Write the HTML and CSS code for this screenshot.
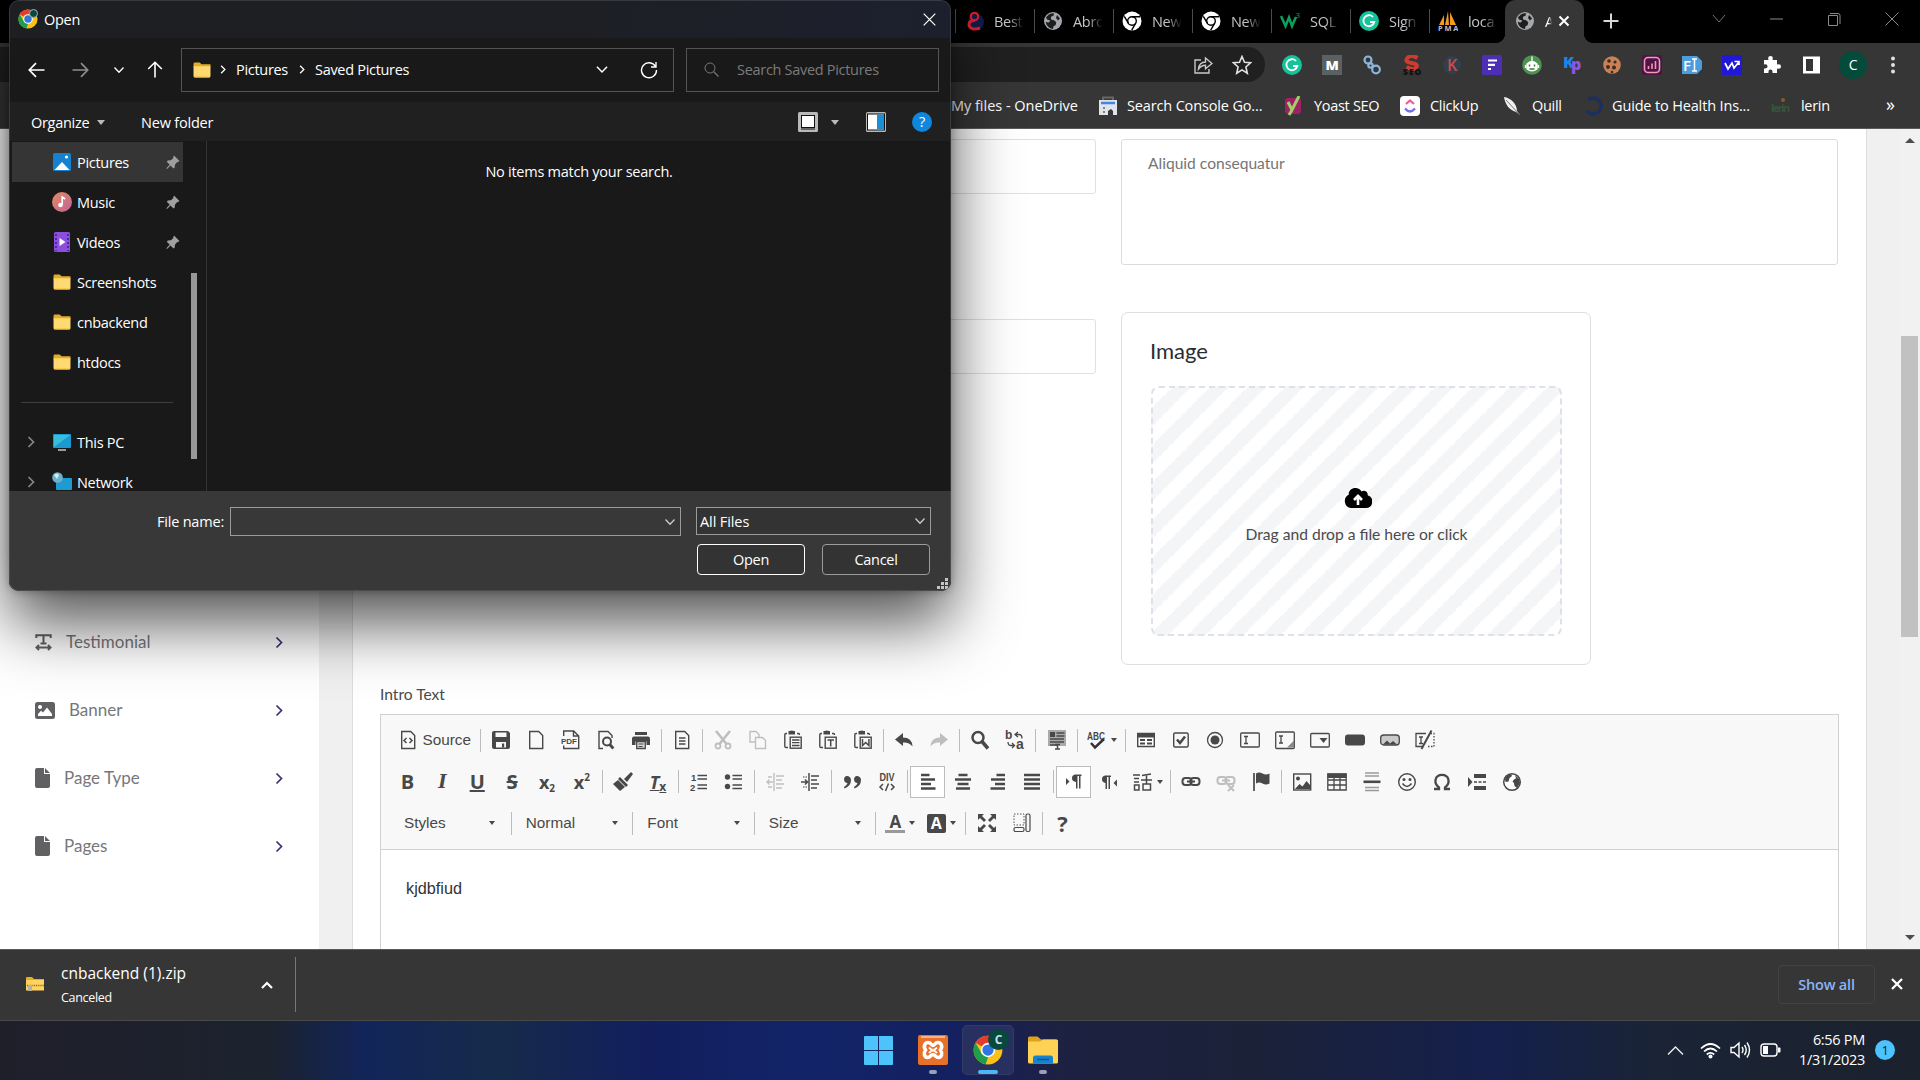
FILE: index.html
```html
<!DOCTYPE html>
<html lang="en">
<head>
<meta charset="utf-8">
<title>Admin - Pages</title>
<link rel="stylesheet" href="styles.css">
</head>
<body>
<svg class="defs" width="0" height="0" aria-hidden="true">
  <symbol id="chrome" viewBox="0 0 48 48"><circle cx="24" cy="24" r="23" fill="#fbc116"/><path d="M24 24 4.100 12.500A23 23 0 0 1 43.900 12.500H24Z" fill="#e33b2e"/><path d="M4.100 12.500 14 30l10 5-9 10.200A23 23 0 0 1 4.100 12.500Z" fill="#1f9d4d"/><path d="m14.500 30 9.500 6-4 11A23 23 0 0 1 8 40Z" fill="#1f9d4d"/><circle cx="24" cy="24" r="11.500" fill="#fff"/><circle cx="24" cy="24" r="9" fill="#2f76e0"/></symbol>
  <symbol id="chrome-w" viewBox="0 0 20 20"><circle cx="10" cy="10" r="9.500" fill="#fff"/><circle cx="10" cy="10" r="4.300" fill="none" stroke="#000" stroke-width="1.400"/><path d="M10 5.700h8M6.300 12.200 2.300 5.300M13.700 12.200l-4 7" stroke="#000" stroke-width="1.400"/></symbol>
  <symbol id="globe" viewBox="0 0 20 20"><circle cx="10" cy="10" r="9" fill="#a5a7aa"/><path d="M3 6.500c2-3 5-4.500 8-4.200l-.5 2.500-2.500 1v2.700l3 .8 2.300 2-.8 3-2 1-.5 2.700C6 17.500 3.500 15 2.700 11l3.300.5 1.200-2L4 8.500ZM14 4l3 3.500-2 2-2-2.500Z" fill="#1d1e20"/></symbol>
  <symbol id="folder" viewBox="0 0 18 17"><path d="M0 2q0-1.500 1.500-1.500h5l2 2H18v3H0Z" fill="#e6ac25"/><path d="M0 4.500h18V15q0 1.500-1.500 1.500h-15Q0 16.500 0 15Z" fill="#ffd971"/><path d="M0 15.500h18q-.3 1-1.500 1h-15Q.3 16.500 0 15.500Z" fill="#f0b92f"/></symbol>
  <symbol id="pin" viewBox="0 0 14 14"><path d="m8 .5 5.500 5.500-1.500 1-1 .2-2 2.300-.3 3-1.200 1-3-3L1 14 .3 13.300 3.700 9.800.8 6.800l1-1.200 3-.3 2.400-2L7.300 2Z" fill="#9d9fa1"/></symbol>
  <symbol id="chev" viewBox="0 0 8 12"><path d="m1.500 1 5 5-5 5" fill="none" stroke="currentColor" stroke-width="1.700"/></symbol>
  <symbol id="down" viewBox="0 0 12 8"><path d="m1.500 1.500 4.500 4.700 4.500-4.700" fill="none" stroke="currentColor" stroke-width="1.300"/></symbol>
  <symbol id="file" viewBox="0 0 15 20"><path d="M2 0h7v6h6v12q0 2-2 2H2q-2 0-2-2V2q0-2 2-2ZM10 0l5 5h-5Z" fill="#616163"/></symbol>
  <symbol id="paste" viewBox="0 0 20 20"><path d="M4 3.500H3q-1.200 0-1.200 1.200v11.600q0 1.200 1.200 1.200h2M14 3.500h1.500q1 0 1 1.500" fill="none" stroke="#484848" stroke-width="1.400"/><path d="M5.500 1h1.500q1-1.200 4 0H12v3.500H5.500Z"/><rect x="7.200" y="7.200" width="11" height="11" fill="none" stroke="#484848" stroke-width="1.400"/></symbol>
  <symbol id="page" viewBox="0 0 20 20"><path d="M3.700 1.500h9l4 4v13h-13Z" fill="none" stroke="currentColor" stroke-width="1.400"/></symbol>
</svg>

<div class="screen">
  <header class="tabs">
    <div class="tab"><svg class="fav" viewBox="0 0 20 20"><circle cx="12" cy="11" r="8" fill="#111b4c"/><path d="M16 17c-5 2-11 1-11-3.500C5 11 7 9.500 11 9.500" fill="none" stroke="#d3202b" stroke-width="3"/><circle cx="10.500" cy="5.500" r="3.700" fill="none" stroke="#d3202b" stroke-width="2.200"/></svg><span>Best</span></div>
    <div class="tab"><svg class="fav"><use href="#globe"/></svg><span>Abro</span></div>
    <div class="tab"><svg class="fav"><use href="#chrome-w"/></svg><span>New</span></div>
    <div class="tab"><svg class="fav"><use href="#chrome-w"/></svg><span>New</span></div>
    <div class="tab"><svg class="fav" viewBox="0 0 20 20"><path d="m1 5 4.500 10L9 6.500 12 15l4-9" fill="none" stroke="#0aa05c" stroke-width="2.500"/><text x="15.500" y="7" font-size="8" fill="#0aa05c">3</text></svg><span>SQL</span></div>
    <div class="tab"><svg class="fav" viewBox="0 0 20 20"><circle cx="10" cy="10" r="10" fill="#15c39a"/><path d="M14 6A5.500 5.500 0 1 0 15.300 11H11" fill="none" stroke="#fff" stroke-width="1.800"/></svg><span>Sign</span></div>
    <div class="tab"><svg class="fav" viewBox="0 0 20 20"><path d="M1 14 6 4v10ZM7 14 10 0l1 14ZM12 14V1l6 13Z" fill="#f39a1f"/><text x="0" y="20" font-size="7.500" font-weight="700" fill="#b9bcd6" textLength="20">PMA</text></svg><span>loca</span></div>
    <div class="tab active"><svg class="fav"><use href="#globe"/></svg><span class="short">A</span><svg class="tx" viewBox="0 0 12 12"><path d="m1.500 1.500 9 9m0-9-9 9" stroke="#fff" stroke-width="2"/></svg></div>
    <svg class="plus" viewBox="0 0 16 16"><path d="M8 .5v15M.5 8h15" stroke="#d8d8d8" stroke-width="2"/></svg>
    <div class="wincontrols">
      <svg width="14" height="20" viewBox="0 0 14 20"><path d="m1 6 6 7 6-7" fill="none" stroke="#727272"/></svg>
      <svg width="14" height="20" viewBox="0 0 14 20"><path d="M0 10h13" stroke="#8a8a8a"/></svg>
      <svg width="14" height="20" viewBox="0 0 14 20"><path d="M3 4.500h8q2 0 2 2V15M1.500 6.500h9v10h-9z" fill="none" stroke="#8a8a8a"/></svg>
      <svg width="14" height="20" viewBox="0 0 14 20"><path d="m.5 3.500 13 13m0-13-13 13" stroke="#8a8a8a"/></svg>
    </div>
  </header>

  <div class="toolbar">
    <div class="omnibox">
      <svg viewBox="0 0 20 20"><path d="M8 5H2v13h14v-4M5.500 14c.5-4.500 3-7 7-7V3l6.500 5.500-6.500 5.300v-3.600c-3 0-5 1-7 3.800Z" fill="none" stroke="#c8c8c8" stroke-width="1.400"/></svg>
      <svg viewBox="0 0 20 20"><path d="m10 1.500 2.500 5.800 6 .5-4.600 4.200 1.400 6.200-5.300-3.300-5.300 3.300L6.100 12 1.500 7.800l6-.5Z" fill="none" stroke="#e2e2e2" stroke-width="1.600"/></svg>
    </div>
    <div class="exts">
      <svg viewBox="0 0 20 20"><circle cx="10" cy="10" r="10" fill="#15c39a"/><path d="M14 6A5.500 5.500 0 1 0 15.300 11H11" fill="none" stroke="#fff" stroke-width="1.800"/></svg>
      <svg viewBox="0 0 20 20"><rect width="20" height="20" fill="#5b6060"/><text x="3.500" y="14.500" font-size="13" font-weight="800" fill="#fff" textLength="13" lengthAdjust="spacingAndGlyphs">M</text></svg>
      <svg viewBox="0 0 20 20"><g fill="none" stroke="#8db4dc" stroke-width="2.200"><circle cx="6" cy="5" r="3.500"/><circle cx="14" cy="14.500" r="3.800"/><circle cx="8.500" cy="10.500" r="2.200"/></g></svg>
      <svg viewBox="0 0 20 20"><path d="M15.500 3Q9-1 5.500 3t4 5 4.500 4.500-9.500-.5" fill="none" stroke="#cf3a31" stroke-width="4"/><text x="1" y="20" font-size="8.500" font-weight="800" fill="#101010" textLength="18">SEO</text></svg>
      <svg viewBox="0 0 20 20"><circle cx="10" cy="10" r="9" fill="#31404e"/><text x="5" y="16" font-size="16" font-weight="600" fill="#d04a4a">K</text></svg>
      <svg viewBox="0 0 20 20"><rect width="20" height="20" rx="1.500" fill="#4d2fb5"/><path d="M6 5.500h9M6 9.800h7M6 14h3" stroke="#fff" stroke-width="2.200"/></svg>
      <svg viewBox="0 0 20 20"><circle cx="10" cy="10" r="9.800" fill="#4d9350"/><path d="M5 9q5-5 10 0v5q-5 3.500-10 0ZM10 7V1.500M3.500 10v3M16.500 10v3" fill="#fff" stroke="#fff" stroke-width="1.300"/><path d="M7.500 9.500v2M12.500 9.500v2M7.500 14h5" stroke="#3b7b40" stroke-width="1.500"/></svg>
      <svg viewBox="0 0 20 20"><text x="1" y="13" font-size="16" font-weight="800" fill="#1687e8">K</text><text x="9" y="15" font-size="16" font-weight="800" fill="#8c55e8">p</text></svg>
      <svg viewBox="0 0 20 20"><circle cx="10" cy="10" r="8.800" fill="#c98155"/><g fill="#3c2b23"><circle cx="7" cy="6" r="1.800"/><circle cx="13" cy="7" r="1.600"/><circle cx="6" cy="12" r="1.900"/><circle cx="12" cy="12.500" r="2"/><circle cx="10" cy="17" r="1.300"/></g></svg>
      <svg viewBox="0 0 20 20"><rect width="20" height="20" rx="2" fill="#4f1347"/><rect x="2.500" y="2.500" width="15" height="15" rx="3.500" fill="none" stroke="#f09ab4" stroke-width="1.600"/><path d="M6.500 14v-3M10 14V8.500M13.500 14V6" stroke="#f09ab4" stroke-width="1.600"/></svg>
      <svg viewBox="0 0 20 20"><path d="M0 1h15l5 5v8l-5 5H0Z" fill="#4d9cdb"/><text x="1" y="15.500" font-size="15" font-weight="600" fill="#fff">F</text><path d="M10 4h5m-2.500 0v12M10 16h5" stroke="#fff" stroke-width="1.500"/></svg>
      <svg viewBox="0 0 20 20"><rect width="20" height="20" fill="#2117d6"/><path d="m3 8 3 6 4-6 2 5 4.500-5.500M12.500 6.500h4.500V10" fill="none" stroke="#fff" stroke-width="1.700"/></svg>
      <svg viewBox="0 0 20 20"><path d="M2 5h4.500q-1.200-4 2-4t2 4H15v4.500q4-1.200 4 2t-4 2V18h-4.500q.5-3.500-2-3.500t-2 3.500H2v-4.500q3.500.3 3.500-2.200T2 9.500Z" fill="#fff"/></svg>
      <svg viewBox="0 0 20 20"><path d="M1 1.500h17v17H1ZM4 4v12h7V4Z" fill="#fff" fill-rule="evenodd"/></svg>
      <svg class="avatar" viewBox="0 0 28 28"><circle cx="14" cy="14" r="14" fill="#044b3c"/><text x="14" y="19" font-size="14" text-anchor="middle" fill="#fff">C</text></svg>
      <svg viewBox="0 0 20 20"><g fill="#e0e0e0"><circle cx="10" cy="3.500" r="2"/><circle cx="10" cy="10" r="2"/><circle cx="10" cy="16.500" r="2"/></g></svg>
    </div>
  </div>

  <nav class="bookmarks">
    <span class="bm b1">My files - OneDrive</span>
    <span class="bm b2"><svg viewBox="0 0 20 20"><path d="M5 4V1.500h10V4" fill="none" stroke="#666" stroke-width="2"/><path d="M1 4h18v15h-4v-4l-2-2-3 2v4H1Z" fill="#dfe3ea"/><path d="M3 7h14" stroke="#4b82e8" stroke-width="2.500"/><path d="M5 12h2M5 16h2" stroke="#7c8591" stroke-width="2"/></svg>Search Console Go...</span>
    <span class="bm b3"><svg viewBox="0 0 20 20"><rect x="1" y="2" width="16" height="16" rx="3" fill="#a02066"/><path d="m4 6 4 8L15 0M8 14l-3 5" fill="none" stroke="#9fcf66" stroke-width="3"/></svg>Yoast SEO</span>
    <span class="bm b4"><svg viewBox="0 0 20 20"><rect width="20" height="20" rx="4" fill="#fff"/><path d="m6 8 4-3.500L14 8" fill="none" stroke="#f45b92" stroke-width="2.300"/><path d="M5 12.500q5 6 10 0" fill="none" stroke="#716cf2" stroke-width="2.300"/></svg>ClickUp</span>
    <span class="bm b5"><svg viewBox="0 0 20 20"><path d="M2 1c7 1 13 7 13 14l3 4-4-3C7 14 3 8 2 1Z" fill="#efefef"/><path d="m4 4 13 14" stroke="#777"/></svg>Quill</span>
    <span class="bm b6"><svg viewBox="0 0 20 20"><path d="M5 4a8 8 0 1 1-1 11" fill="none" stroke="#1d305d" stroke-width="3.500"/></svg>Guide to Health Ins...</span>
    <span class="bm b7"><svg viewBox="0 0 20 20"><text x="0" y="16" font-size="11" font-weight="700" fill="#37543c" textLength="19">lerin</text><circle cx="12" cy="4" r="2" fill="#8a5a26"/></svg>lerin</span>
    <span class="bm more">»</span>
  </nav>

  <div class="page">
    <aside class="sidebar">
      <a class="nav"><svg width="17" height="17" viewBox="0 0 17 17"><path d="M1.300 4V1.300h14.400V4M8.500 1.300V9.500M5.500 9.500h6M2 13.500h13M4 11l-2.500 2.500L4 16M13 11l2.500 2.500L13 16" fill="none" stroke="#616163" stroke-width="2"/></svg><span>Testimonial</span><svg class="go"><use href="#chev"/></svg></a>
      <a class="nav"><svg width="20" height="17" viewBox="0 0 20 17"><path d="M2.500 0h15Q20 0 20 2.500v12q0 2.500-2.500 2.500h-15Q0 17 0 14.500v-12Q0 0 2.500 0ZM5 3a2 2 0 1 0 .1 0ZM3 14h14v-2l-5-6.500-4 5-2-1.700L3 12Z" fill="#616163" fill-rule="evenodd"/></svg><span>Banner</span><svg class="go"><use href="#chev"/></svg></a>
      <a class="nav"><svg width="15" height="20"><use href="#file"/></svg><span>Page Type</span><svg class="go"><use href="#chev"/></svg></a>
      <a class="nav"><svg width="15" height="20"><use href="#file"/></svg><span>Pages</span><svg class="go"><use href="#chev"/></svg></a>
    </aside>
    <main class="content">
      <section class="card">
        <div class="cols">
          <div class="col left"><div class="field"></div><div class="field"></div></div>
          <div class="col">
            <div class="textarea"><span>Aliquid consequatur</span></div>
            <div class="imgcard">
              <h4>Image</h4>
              <div class="drop">
                <svg width="28" height="20" viewBox="0 0 28 20"><path d="M7 20a7 7 0 0 1-2.300-13.200C4.500 2.800 7.500 0 11.500 0c2.700 0 5 1.400 6 3.500 2.800-1.800 6.700.2 6.200 3.800A6.500 6.500 0 0 1 22 20Z"/><path d="M14 17V8m-4 4 4-4.200 4 4.200" fill="none" stroke="#fff" stroke-width="2.600"/></svg>
                <p>Drag and drop a file here or click</p>
              </div>
            </div>
          </div>
        </div>
        <label class="lbl">Intro Text</label>
        <div class="editor">
          <div class="cktop">
            <div class="row">
              <span class="b source"><svg class="i" color="#484848"><use href="#page"/></svg><svg class="i over" viewBox="0 0 20 20"><path d="m8.500 8-2.500 2.500L8.500 13m3-5 2.500 2.500-2.500 2.500" fill="none" stroke="#484848" stroke-width="1.500"/></svg>Source</span>
              <i class="sep"></i>
              <span class="b"><svg class="i" viewBox="0 0 20 20"><path d="M3 1h14l2 2v14q0 2-2 2H3q-2 0-2-2V3q0-2 2-2Zm1.500 1.500V7h11V2.500ZM5 12v5.500h10V12Z" fill-rule="evenodd"/><path d="M11 13.500h2.200v4H11Z"/></svg></span>
              <span class="b"><svg class="i" color="#484848"><use href="#page"/></svg></span>
              <span class="b"><svg class="i" viewBox="0 0 20 20"><path d="M2.700 6V1h10l5 5v12.500h-15v-3M12.500 1v5h5" fill="none" stroke="#484848" stroke-width="1.400"/><rect x="0" y="7.500" width="16" height="7" fill="#f8f8f8"/><text x="0" y="14" font-size="8" font-weight="800" textLength="16" lengthAdjust="spacingAndGlyphs">PDF</text></svg></span>
              <span class="b"><svg class="i" viewBox="0 0 20 20"><path d="M7 18.500H3v-17h9l4 4V8" fill="none" stroke="#484848" stroke-width="1.400"/><circle cx="11" cy="11.500" r="4" fill="none" stroke="#484848" stroke-width="2"/><path d="m13.800 14.500 3.500 4" stroke="#484848" stroke-width="2.800"/></svg></span>
              <span class="b"><svg class="i" viewBox="0 0 20 20"><path d="M4 2h12v3H4ZM3 6.500h14q2 0 2 2V15h-3.500v-3.500h-11V15H1V8.500q0-2 2-2Z"/><path d="M5.700 11.500h8.600v7H5.700Z" fill="#d9d9d9" stroke="#484848" stroke-width="1.300"/><path d="M7.500 14h5M7.500 16.500h4" stroke="#484848" stroke-width="1.200"/></svg></span>
              <i class="sep"></i>
              <span class="b"><svg class="i" color="#484848" viewBox="0 0 20 20"><path d="M3.700 1.500h9l4 4v13h-13ZM7 8h6.500M7 11h6.500M7 14h6.500" fill="none" stroke="#484848" stroke-width="1.400"/></svg></span>
              <i class="sep"></i>
              <span class="b dis"><svg class="i" viewBox="0 0 20 20"><path d="m3 1 10.500 13M17 1 6.500 14" stroke="#484848" stroke-width="2.600"/><g fill="none" stroke="#484848" stroke-width="1.800"><circle cx="5" cy="16" r="2.500"/><circle cx="15" cy="16" r="2.500"/></g></svg></span>
              <span class="b dis"><svg class="i" viewBox="0 0 20 20"><path d="M7 12H2V1.500h6l3 3V7M7.500 7.500h7l3 3v8h-10Z" fill="none" stroke="#484848" stroke-width="1.400"/></svg></span>
              <span class="b"><svg class="i"><use href="#paste"/></svg><svg class="i over" viewBox="0 0 20 20"><path d="M9 10h7.500M9 12.700h7.500M9 15.500h7.500" stroke="#484848" stroke-width="1.300"/></svg></span>
              <span class="b"><svg class="i"><use href="#paste"/></svg><svg class="i over" viewBox="0 0 20 20"><path d="M9.500 10h6.500M12.700 10v6.500" stroke="#484848" stroke-width="1.500"/></svg></span>
              <span class="b"><svg class="i"><use href="#paste"/></svg><svg class="i over" viewBox="0 0 20 20"><path d="M9.500 9v6.500l3.200-3 3.200 3V9" fill="none" stroke="#484848" stroke-width="1.500"/></svg></span>
              <i class="sep"></i>
              <span class="b"><svg class="i" viewBox="0 0 20 20"><path d="M1 9.500 9 3v4.500q9 0 9.500 9-3.500-4.500-9.500-4V16Z"/></svg></span>
              <span class="b dis"><svg class="i" viewBox="0 0 20 20"><path d="M19 9.500 11 3v4.500q-9 0-9.500 9 3.500-4.500 9.500-4V16Z"/></svg></span>
              <i class="sep"></i>
              <span class="b"><svg class="i" viewBox="0 0 20 20"><circle cx="8" cy="7.500" r="5.500" fill="none" stroke="#484848" stroke-width="2.500"/><path d="m12 11.500 6 7" stroke="#484848" stroke-width="3.500"/></svg></span>
              <span class="b"><svg class="i" viewBox="0 0 20 20"><text x="0" y="9" font-size="12" font-weight="700">b</text><text x="11" y="19" font-size="14" font-weight="700">a</text><path d="M10 4.500h4q3 0 3 4M13 2l-3 2.500L13 7M3 12q0 3.500 3 3.500h3M7 13l2.500 2.500L7 18" fill="none" stroke="#484848" stroke-width="1.300"/></svg></span>
              <i class="sep"></i>
              <span class="b"><svg class="i" viewBox="0 0 20 20"><path d="M1 0h18v16H1Z" fill="#aaa"/><path d="M3 2h5v5H3Z"/><path d="M9.500 3h8M9.500 6h8M3 9h14M3 12h14M3 15h8M8 14.500h5M8 19h5M10.500 14.500V19" stroke="#484848" stroke-width="1.500"/></svg></span>
              <i class="sep"></i>
              <span class="b dd"><svg class="i" viewBox="0 0 20 20"><text x="0" y="9.500" font-size="11" textLength="18" font-weight="600" lengthAdjust="spacingAndGlyphs">ABC</text><path d="m4 13 4 4.500L17 9" fill="none" stroke="#333" stroke-width="2.500"/></svg><em></em></span>
              <i class="sep"></i>
              <span class="b"><svg class="i" viewBox="0 0 20 20"><path d="M1.700 3.500h16.600v13H1.700Z" fill="#fff" stroke="#484848" stroke-width="1.400"/><path d="M1 3h18v4.500H1Z"/><path d="M4 10h5M4 13.500h5M11 10h5M11 13.500h5" stroke="#484848" stroke-width="1.800"/></svg></span>
              <span class="b"><svg class="i" viewBox="0 0 20 20"><rect x="2.700" y="3" width="14.500" height="14" rx="1.500" fill="none" stroke="#484848" stroke-width="1.400"/><path d="m6 9.500 3 3.500 5-6.500" fill="none" stroke="#484848" stroke-width="2.600"/></svg></span>
              <span class="b"><svg class="i" viewBox="0 0 20 20"><circle cx="10" cy="10" r="7.500" fill="none" stroke="#484848" stroke-width="1.300"/><circle cx="10" cy="10" r="4.500"/></svg></span>
              <span class="b"><svg class="i" viewBox="0 0 20 20"><rect x=".7" y="3" width="18.600" height="14" rx="1" fill="none" stroke="#484848" stroke-width="1.300"/><path d="M4 6.500h4M4 13.500h4M6 6.500v7" stroke="#484848" stroke-width="1.300"/></svg></span>
              <span class="b"><svg class="i" viewBox="0 0 20 20"><rect x=".7" y="2" width="18.600" height="16.500" rx="1" fill="none" stroke="#484848" stroke-width="1.300"/><path d="M4 6h4M4 13h4M6 6v7" stroke="#484848" stroke-width="1.300"/><path d="m12 17.500 7-7v7Z" fill="#888"/></svg></span>
              <span class="b"><svg class="i" viewBox="0 0 20 20"><rect x=".7" y="3.500" width="18.600" height="13.500" rx="1" fill="none" stroke="#484848" stroke-width="1.300"/><path d="M9.500 8h8L13.500 13Z"/></svg></span>
              <span class="b"><svg class="i" viewBox="0 0 20 20"><rect x="0" y="4.500" width="20" height="11" rx="3"/></svg></span>
              <span class="b"><svg class="i" viewBox="0 0 20 20"><rect x=".7" y="5" width="18.600" height="10" rx="3" fill="#c9c9c9" stroke="#484848" stroke-width="1.300"/><path d="m3 14.500 4-4 3 3 3-2.500 4 3.500Z"/></svg></span>
              <span class="b"><svg class="i" viewBox="0 0 20 20"><path d="M11 3.500H1v13h7M4 7h4M4 13.500h4M6 7v6.500" fill="none" stroke="#484848" stroke-width="1.300"/><path d="m6.500 19 10-18.500" stroke="#484848" stroke-width="2"/><path d="M13 16.500h6v-13h-3" fill="none" stroke="#484848" stroke-width="1.300" stroke-dasharray="1.500 1.500"/></svg></span>
            </div>
            <div class="row">
              <span class="b t">B</span><span class="b t it">I</span><span class="b t u">U</span><span class="b t s">S</span><span class="b t x">x<sub>2</sub></span><span class="b t x">x<sup>2</sup></span>
              <i class="sep"></i>
              <span class="b"><svg class="i" viewBox="0 0 20 20"><path d="m18 0 2 2-6 8-3-3Z"/><path d="m7 5 8 8-2 2-8-8Z"/><path d="m5 8 7 7-5 4-7-7Z"/></svg></span>
              <span class="b t it rf">T<small>x</small></span>
              <i class="sep"></i>
              <span class="b"><svg class="i" viewBox="0 0 20 20"><text x="2" y="8.500" font-size="9.500" font-weight="700">1</text><text x="1" y="19" font-size="9.500" font-weight="700">2</text><path d="M8.500 3.500H18M8.500 7H18M8.500 13H18M8.500 16.500H18" stroke="#484848" stroke-width="1.300"/></svg></span>
              <span class="b"><svg class="i" viewBox="0 0 20 20"><circle cx="3.500" cy="5" r="2.700"/><circle cx="3.500" cy="14.500" r="2.700"/><path d="M8.500 3.500H18M8.500 7H18M8.500 13H18M8.500 16.500H18" stroke="#484848" stroke-width="1.300"/></svg></span>
              <i class="sep"></i>
              <span class="b dis"><svg class="i" viewBox="0 0 20 20"><path d="M9 1v18M11 4h8M11 8h6M11 12h8M11 16h6" stroke="#484848" stroke-width="1.400"/><path d="M2 10h6M4.500 7.500 2 10l2.500 2.500M3 5h4M3 15h4" fill="none" stroke="#484848" stroke-width="1.300"/></svg></span>
              <span class="b"><svg class="i" viewBox="0 0 20 20"><path d="M9 1v18M11 4h8M11 8h6M11 12h8M11 16h6" stroke="#484848" stroke-width="1.500"/><path d="M1 10h6M5 7.500 7.500 10 5 12.500" fill="none" stroke="#484848" stroke-width="1.500"/><path d="M3 5h4M3 15h4" stroke="#484848" stroke-dasharray="1.500 1"/></svg></span>
              <i class="sep"></i>
              <span class="b"><svg class="i" viewBox="0 0 20 20"><path d="M4.500 4a4 4 0 0 1 4.500 4q0 6-6.500 8.500L2 15q3-1.500 3.500-4A3.600 3.600 0 0 1 4.500 4ZM14.500 4A4 4 0 0 1 19 8q0 6-6.500 8.500L12 15q3-1.500 3.500-4a3.600 3.600 0 0 1-1-7Z"/></svg></span>
              <span class="b"><svg class="i" viewBox="0 0 20 20"><text x="2.500" y="9" font-size="11" textLength="15" lengthAdjust="spacingAndGlyphs" font-weight="600">DIV</text><path d="M6 12 3 15l3 3M14 12l3 3-3 3M11.500 11.500l-3 7.500" fill="none" stroke="#484848" stroke-width="1.500"/></svg></span>
              <i class="sep"></i>
              <span class="b on"><svg class="i" viewBox="0 0 20 20"><path d="M3 3h8.500M3 7.500h14M3 12h10M3 16.500h14.500" stroke="#484848" stroke-width="2.600"/></svg></span>
              <span class="b"><svg class="i" viewBox="0 0 20 20"><path d="M5.500 3h9M2 7.500h16M4.500 12h11M3 16.500h14" stroke="#484848" stroke-width="2.600"/></svg></span>
              <span class="b"><svg class="i" viewBox="0 0 20 20"><path d="M8.500 3H17M3 7.500h14M7 12h10M2.500 16.500H17" stroke="#484848" stroke-width="2.600"/></svg></span>
              <span class="b"><svg class="i" viewBox="0 0 20 20"><path d="M2 3h16M2 7.500h16M2 12h16M2 16.500h16" stroke="#484848" stroke-width="2.600"/></svg></span>
              <i class="sep"></i>
              <span class="b on"><svg class="i" viewBox="0 0 20 20"><path d="M2 6v7l3.500-3.500ZM11 2.500h6.500V4h-1v12.500h-1.500V4h-1.500v12.500H12V10q-4-.5-4-3.700t3-3.800Z"/></svg></span>
              <span class="b"><svg class="i" viewBox="0 0 20 20"><path d="M18 7.500v7L14.500 11ZM6 3.500h6V5h-1v12H9.500V5H8v12H6.500v-6Q3 10.500 3 7.300T6 3.500Z"/></svg></span>
              <span class="b dd"><svg class="i" viewBox="0 0 20 20"><path d="M0 3h7M1 6.500h5M1 10h5M1.500 13h4.500v5H1.500ZM9 3.500l9-1.500M8 8h11M13.500 3v9M10 12h7.500v6H10Z" fill="none" stroke="#484848" stroke-width="1.500"/></svg><em></em></span>
              <i class="sep"></i>
              <span class="b"><svg class="i" viewBox="0 0 20 20"><g fill="none" stroke="#484848" stroke-width="2"><rect x="1.500" y="6" width="9" height="7" rx="3"/><rect x="9.500" y="6" width="9" height="7" rx="3"/><path d="M6 9.500h8"/></g></svg></span>
              <span class="b dis"><svg class="i" viewBox="0 0 20 20"><g fill="none" stroke="#484848" stroke-width="2"><rect x="1.500" y="5" width="9" height="7" rx="3"/><rect x="9.500" y="5" width="9" height="7" rx="3"/><path d="M6 8.500h8M12 13l6 6m0-6-6 6"/></g></svg></span>
              <span class="b"><svg class="i" viewBox="0 0 20 20"><path d="M3 1v18" stroke="#484848" stroke-width="1.700"/><path d="M5 1.500q3-2 6.500 0t7 0v10q-3.500 2-7 0t-6.500 0Z"/></svg></span>
              <i class="sep"></i>
              <span class="b"><svg class="i" viewBox="0 0 20 20"><rect x="1.700" y="2" width="17" height="16" fill="none" stroke="#484848" stroke-width="1.400"/><circle cx="6" cy="6.500" r="2"/><path d="m3 17 4.500-5 3 2.500L14.500 9l3.500 4v4Z"/></svg></span>
              <span class="b"><svg class="i" viewBox="0 0 20 20"><path d="M.8 2h18.400v16H.8ZM.8 8h18.400M.8 13h18.400M7 5v13M13 5v13" fill="none" stroke="#484848" stroke-width="1.300"/><path d="M.5 1.500h19V6H.5Z"/></svg></span>
              <span class="b"><svg class="i" viewBox="0 0 20 20"><path d="M3 1h14M3 4h14M3 15.500h14M3 18.500h14" stroke="#999" stroke-width="1.400"/><path d="M1.500 9.800h17" stroke="#484848" stroke-width="2.600"/></svg></span>
              <span class="b"><svg class="i" viewBox="0 0 20 20"><circle cx="10" cy="10" r="8.300" fill="none" stroke="#484848" stroke-width="1.400"/><circle cx="7" cy="7.500" r="1.500"/><circle cx="13" cy="7.500" r="1.500"/><path d="M5.500 11.500q4.500 6 9 0" fill="none" stroke="#484848" stroke-width="1.500"/></svg></span>
              <span class="b"><svg class="i" viewBox="0 0 20 20"><path d="M2 17h5v-1.500C1 11 3 2.800 10 2.800S19 11 13 15.500V17h5" fill="none" stroke="#484848" stroke-width="2.300"/></svg></span>
              <span class="b"><svg class="i" viewBox="0 0 20 20"><path d="m1 5 4.500 5L1 15Z"/><path d="M7 2h12v4H7ZM7 14h12v4H7Z"/><path d="M7 10h12" stroke="#484848" stroke-width="1.600" stroke-dasharray="3 1.500"/></svg></span>
              <span class="b"><svg class="i" viewBox="0 0 20 20"><circle cx="10" cy="10" r="8.300" fill="#fff" stroke="#484848" stroke-width="1.500"/><path d="M3 7q2-4.500 6-5l1 2-2.500 2-1 3.500-3 .5ZM13 3l4 4 1 4-3 5-2.500-2-.5-3-1.500-1.500L12 7.500l2-1Z"/></svg></span>
            </div>
            <div class="row r3">
              <span class="combo">Styles<em></em></span><i class="sep"></i><span class="combo">Normal<em></em></span><i class="sep"></i><span class="combo">Font<em></em></span><i class="sep"></i><span class="combo">Size<em></em></span><i class="sep"></i>
              <span class="b dd t"><span class="fc">A</span><em></em></span>
              <span class="b dd t"><span class="bc">A</span><em></em></span>
              <i class="sep"></i>
              <span class="b"><svg class="i" viewBox="0 0 20 20"><path d="M1 1h6L5 3l4 4-2 2-4-4-2 2ZM19 1v6l-2-2-4 4-2-2 4-4-2-2ZM1 19v-6l2 2 4-4 2 2-4 4 2 2ZM19 19h-6l2-2-4-4 2-2 4 4 2-2Z"/></svg></span>
              <span class="b"><svg class="i" viewBox="0 0 20 20"><path d="M2 1h10v11H2Z" fill="none" stroke="#555" stroke-dasharray="1.500 1.500"/><rect x="14" y="1" width="4" height="17.500" rx="1.500" fill="none" stroke="#484848" stroke-width="1.200"/><rect x="2" y="14.500" width="10" height="4" rx="1.500" fill="none" stroke="#484848" stroke-width="1.200"/></svg></span>
              <i class="sep"></i>
              <span class="b t q">?</span>
            </div>
          </div>
          <div class="ckbody">kjdbfiud</div>
        </div>
      </section>
    </main>
    <div class="scroll"><i class="ar up"></i><i class="thumb"></i><i class="ar dn"></i></div>
  </div>

  <footer class="downloads">
    <svg class="zip" viewBox="0 0 18 15"><path d="M0 1q0-1 1-1h5l2 2h10v4H0Z" fill="#e6ac25"/><path d="M0 3h18v10.500H0Z" fill="#ffd35c"/><path d="M1 8.500h17" stroke="#7d6a3c" stroke-width="1.600" stroke-dasharray="1 .8"/><path d="M2 8h4v6H2Z" fill="#b9b2a2"/></svg>
    <div class="dl"><b>cnbackend (1).zip</b><small>Canceled</small></div>
    <svg class="dlup" viewBox="0 0 12 8"><path d="m1 7 5-5 5 5" fill="none" stroke="#fff" stroke-width="2.200"/></svg>
    <span class="showall">Show all</span>
    <svg class="dlx" viewBox="0 0 12 12"><path d="m1 1 10 10m0-10L1 11" stroke="#fff" stroke-width="2.300"/></svg>
  </footer>

  <div class="taskbar">
    <div class="apps">
      <span class="app"><svg width="29" height="29" viewBox="0 0 29 29"><path d="M0 1q0-1 1-1h13v14H0ZM15 0h13q1 0 1 1v13H15ZM0 15h14v14H1q-1 0-1-1ZM15 15h14v13q0 1-1 1H15Z" fill="#4cc3fb"/></svg></span>
      <span class="app run"><svg width="30" height="30" viewBox="0 0 30 30"><rect width="30" height="30" rx="2" fill="#e8712a"/><path d="M3 2h24" stroke="#f6b288" stroke-width="2"/><path d="M10 7.500c3 0 3.500 3 5 3s2-3 5-3 5 4 2.500 7.500c2.500 3.500 1 7.500-2 7.500s-3.500-3-5.500-3-2.500 3-5.500 3-4.500-4-2-7.500C5 11.500 7 7.500 10 7.500Z" fill="none" stroke="#fff" stroke-width="3.600"/><path d="M11 12.500q4 5 8 0M11 18q4-5 8 0" fill="none" stroke="#fff" stroke-width="2"/></svg></span>
      <span class="app run cur"><svg width="30" height="30"><use href="#chrome"/></svg><i class="cb">C</i></span>
      <span class="app run"><svg width="30" height="28" viewBox="0 0 30 28"><path d="M0 2q0-1.500 1.500-1.500h8l3.500 3h15q2 0 2 2V10H0Z" fill="#dfa21b"/><path d="M0 5.500h12l3-2h13.500Q30 3.500 30 5v21q0 1.500-1.500 1.500h-27Q0 27.500 0 26Z" fill="#fdd255"/><path d="M5 27.500V22q0-2.500 2.500-2.500h15q2.500 0 2.500 2.500v5.500Z" fill="#1683cf"/><path d="M9 23.500h12" stroke="#0b5a9c" stroke-width="1.600"/></svg></span>
    </div>
    <div class="tray">
      <svg width="17" height="11" viewBox="0 0 17 11"><path d="m1 9.500 7.500-7.500L16 9.500" fill="none" stroke="#eee" stroke-width="1.400"/></svg>
      <svg width="21" height="17" viewBox="0 0 21 17"><path d="M1 6.500q9.500-9 19 0M4 9.500q6.500-6 13 0M6.800 12.500q3.700-3.300 7.400 0" fill="none" stroke="#fff" stroke-width="1.700"/><circle cx="10.500" cy="14.500" r="2" fill="#fff"/></svg>
      <svg width="21" height="18" viewBox="0 0 21 18"><path d="M1 6.500h3L9 2v14l-5-4.500H1ZM12 6q2 3 0 6M14.500 4q3.500 5 0 10M17 1.500q5 7.500 0 15" fill="none" stroke="#fff" stroke-width="1.400"/></svg>
      <svg width="21" height="14" viewBox="0 0 21 14"><rect x="1" y="1" width="16" height="12" rx="3" fill="none" stroke="#fff" stroke-width="1.400"/><rect x="3" y="3" width="5" height="8" fill="#fff"/><path d="M18 4.500h1.500q1 0 1 1v3q0 1-1 1H18Z" fill="#fff"/></svg>
      <div class="clock"><span>6:56 PM</span><span>1/31/2023</span></div>
      <i class="note">1</i>
    </div>
  </div>

  <div class="dialog">
    <div class="d-title"><svg width="20" height="20"><use href="#chrome"/></svg><i class="d-badge"></i><span>Open</span><svg class="d-x" viewBox="0 0 13 13"><path d="m.7.7 11.600 11.600m0-11.600L.7 12.300" stroke="#fff" stroke-width="1.200"/></svg></div>
    <div class="d-nav">
      <svg class="a1" width="17" height="16" viewBox="0 0 17 16"><path d="M16.500 8H1.500M8 1.200 1.300 8 8 14.800" fill="none" stroke="#fff" stroke-width="1.700"/></svg>
      <svg class="a2" width="17" height="16" viewBox="0 0 17 16"><path d="M.5 8h15M9 1.200 15.700 8 9 14.800" fill="none" stroke="#8e8e8e" stroke-width="1.700"/></svg>
      <svg class="a3" width="12" height="8"><use href="#down"/></svg>
      <svg class="a4" width="16" height="17" viewBox="0 0 16 17"><path d="M8 16.500V1.500M1.200 8 8 1.300 14.800 8" fill="none" stroke="#fff" stroke-width="1.600"/></svg>
      <div class="addr"><svg width="18" height="16"><use href="#folder"/></svg><svg class="c1" width="6" height="9"><use href="#chev"/></svg><span class="p1">Pictures</span><svg class="c2" width="6" height="9"><use href="#chev"/></svg><span class="p2">Saved Pictures</span><svg class="c3" width="14" height="9"><use href="#down"/></svg><svg class="c4" width="18" height="18" viewBox="0 0 18 18"><path d="M15.500 5.500A7.500 7.500 0 1 0 16.500 9M16 1v5h-5" fill="none" stroke="#fff" stroke-width="1.400"/></svg></div>
      <div class="search"><svg width="15" height="15" viewBox="0 0 15 15"><circle cx="6" cy="6" r="5" fill="none" stroke="#777"/><path d="m9.500 9.500 5 5" stroke="#777" stroke-width="1.300"/></svg><span>Search Saved Pictures</span></div>
    </div>
    <div class="d-tools">
      <span class="organize">Organize</span><i class="tri"></i><span class="newf">New folder</span>
      <svg class="v1" width="20" height="20" viewBox="0 0 20 20"><rect width="20" height="20" rx="1.500" fill="#b9b9b9"/><rect x="3.500" y="3.500" width="13" height="12" fill="#fff" stroke="#111"/><path d="M3 17h14" stroke="#111"/></svg><i class="tri t2"></i>
      <svg class="v2" width="20" height="20" viewBox="0 0 20 20"><rect width="20" height="20" rx="1.500" fill="#b9b9b9"/><rect x="1.500" y="2" width="17" height="16" fill="#fff" stroke="#111"/><path d="M11 2.500h7v15h-7Z" fill="#1a8fd6"/></svg>
      <i class="help">?</i>
    </div>
    <div class="d-body">
      <div class="tree">
        <div class="ti sel"><svg class="ic" viewBox="0 0 18 18"><rect width="18" height="18" rx="1.500" fill="#1581cf"/><path d="m1.500 17 7.500-8 7.500 8Z" fill="#fff"/><circle cx="13.500" cy="4" r="1.600" fill="#fff"/></svg>Pictures<svg class="pin"><use href="#pin"/></svg></div>
        <div class="ti"><svg class="ic big" viewBox="0 0 20 20"><defs><linearGradient id="mg" x2="1" y2="1"><stop stop-color="#e58a5f"/><stop offset="1" stop-color="#c0639a"/></linearGradient></defs><circle cx="10" cy="10" r="10" fill="url(#mg)"/><circle cx="8.500" cy="13" r="2.300" fill="#fff"/><path d="M10.200 13V5l3 2" fill="none" stroke="#fff" stroke-width="1.600"/></svg>Music<svg class="pin"><use href="#pin"/></svg></div>
        <div class="ti"><svg class="ic big" viewBox="0 0 20 20"><rect x="2" y="0" width="16" height="20" rx="1.500" fill="#8c4fdd"/><path d="M4 2v17M16 2v17" stroke="#4a2491" stroke-width="1.800" stroke-dasharray="2 2"/><path d="m7.500 6 6 4-6 4Z" fill="#fff"/></svg>Videos<svg class="pin"><use href="#pin"/></svg></div>
        <div class="ti"><svg class="ic fo"><use href="#folder"/></svg>Screenshots</div>
        <div class="ti"><svg class="ic fo"><use href="#folder"/></svg>cnbackend</div>
        <div class="ti"><svg class="ic fo"><use href="#folder"/></svg>htdocs</div>
        <div class="ti line"></div>
        <div class="ti"><svg class="tw"><use href="#chev"/></svg><svg class="ic" viewBox="0 0 18 18"><rect y="1" width="18" height="14" rx="1" fill="#1c9ad0"/><path d="M1 2h16L1 14Z" fill="#36bfdb"/><path d="M5 17h8" stroke="#bbb" stroke-width="1.600"/></svg>This PC</div>
        <div class="ti"><svg class="tw"><use href="#chev"/></svg><svg class="ic big" viewBox="0 0 20 20"><rect x="4" y="6" width="16" height="12" rx="1" fill="#1e9cd2"/><circle cx="5.500" cy="5.500" r="5.300" fill="#6fb1cd"/><path d="M2 3q3-3 5 0l-2 4Z" fill="#d6edf5"/><path d="M9 19.500h6" stroke="#bbb"/></svg>Network</div>
      </div>
      <i class="tthumb"></i>
      <div class="files">No items match your search.</div>
    </div>
    <div class="d-foot">
      <div class="fr"><label>File name:</label><div class="inp"><svg width="12" height="8"><use href="#down"/></svg></div><div class="inp sel2"><span>All Files</span><svg width="12" height="8"><use href="#down"/></svg></div></div>
      <div class="fb"><button class="open">Open</button><button>Cancel</button></div>
      <svg class="grip" width="11" height="11" viewBox="0 0 11 11"><path d="M8 0h3v3H8ZM4 4h3v3H4ZM8 4h3v3H8ZM0 8h3v3H0ZM4 8h3v3H4ZM8 8h3v3H8Z" fill="#c4c4c4"/></svg>
    </div>
  </div>
</div>
</body>
</html>
```
FILE: styles.css
```css
* { box-sizing: border-box; }
body { margin: 0; font-family: "Open Sans", "Noto Sans", sans-serif; font-size: 14.500px; letter-spacing: -0.3px; }
i, em { font-style: normal; }
svg { flex: none; display: block; }
.defs { position: absolute; }
.screen { position: relative; width: 1920px; height: 1080px; overflow: hidden; display: flex; flex-direction: column; background: #fff; }

/* Tab strip */
.tabs { height: 43px; flex: none; background: #000; display: flex; align-items: center; padding-left: 955px; padding-bottom: 1px; color: #c3c5c8; }
.tab { width: 79px; height: 24px; flex: none; border-left: 1px solid #4b4b4b; display: flex; align-items: center; padding-left: 8px; gap: 10px; }
.fav { width: 20px; height: 20px; }
.tab span { width: 30px; overflow: hidden; white-space: nowrap; -webkit-mask-image: linear-gradient(90deg, #000 50%, transparent); mask-image: linear-gradient(90deg, #000 50%, transparent); }
.tab.active { height: 43px; width: 79px; background: #363636; border: 0; border-radius: 10px 10px 0 0; margin-left: -3px; margin-bottom: -1px; padding-left: 10px; padding-bottom: 1px; position: relative; }
.tab.active::before, .tab.active::after { content: ""; position: absolute; bottom: 0; width: 10px; height: 10px; }
.tab.active::before { left: -10px; background: radial-gradient(circle at 0 0, #000 10px, #363636 10.500px); }
.tab.active::after { right: -10px; background: radial-gradient(circle at 100% 0, #000 10px, #363636 10.500px); }
.tab.active .short { width: 7px; color: #fff; }
.tx { width: 12px; height: 12px; margin-left: -4px; }
.plus { width: 16px; height: 16px; margin-left: 19px; }
.wincontrols { display: flex; gap: 43.500px; margin-left: 93px; margin-top: -5px; }

/* Toolbar and bookmarks */
.toolbar { height: 43px; flex: none; background: #363636; display: flex; align-items: center; }
.omnibox { width: 1265px; height: 35px; background: #202020; border-radius: 0 18px 18px 0; display: flex; justify-content: flex-end; align-items: center; gap: 19px; padding-right: 13px; }
.omnibox svg, .exts svg { width: 20px; height: 20px; }
.exts { display: flex; align-items: center; padding-left: 17px; gap: 20px; }
.exts .avatar { width: 28px; height: 28px; margin: 0 -4px 0 -3px; }
.bookmarks { height: 43px; flex: none; background: #363636; border-bottom: 1px solid #5b5b5b; display: grid; grid-template-columns: 1098px 186px 116px 102px 81px 188px 110px 1fr; align-items: center; color: #fff; padding-bottom: 3px; }
.bm { display: flex; align-items: center; gap: 10px; white-space: nowrap; }
.bm svg { width: 20px; height: 20px; }
.b1 { padding-left: 951px; letter-spacing: -0.020px; }
.b2, .b6 { letter-spacing: -0.150px; }
.b2 { gap: 9px; } .b6 { gap: 9px; }
.more { font-size: 18px; padding: 0 0 3px 5px; }

/* Page */
.page { height: 820px; flex: none; display: flex; background: #f0f0f0; overflow: hidden; }
.sidebar { width: 319px; background: #fff; padding: 479px 36px 0 35px; font-family: Lato, sans-serif; font-size: 17px; letter-spacing: 0; color: #77777b; }
.nav { height: 68px; display: flex; align-items: center; }
.nav .go { width: 8px; height: 13px; margin-left: auto; color: #3a3170; }
.nav span { margin: -1px 0 0 14px; }
.content { flex: 1; padding-left: 33px; }
.card { width: 1515px; height: 820px; background: #fff; border: solid #dedede; border-width: 0 1px; padding: 10px 27px 0; font-family: Lato, sans-serif; letter-spacing: 0; color: #4a4a4a; }
.cols { display: grid; grid-template-columns: 716px 717px; gap: 25px; height: 546px; }
.field { height: 55px; border: 1px solid #e0e0e4; border-radius: 3px; margin-bottom: 125px; }
.textarea { height: 126px; border: 1px solid #dcdce0; border-radius: 3px; padding: 13px 26px; font-size: 15.600px; line-height: 20px; color: #757575; }
.imgcard { width: 470px; height: 353px; margin-top: 47px; border: 1px solid #dfdfe3; border-radius: 7px; padding: 23px 28px; }
h4 { margin: 0 0 21px; font-size: 22px; line-height: 29px; font-weight: 400; color: #2c2c30; }
.drop { width: 411px; height: 250px; margin-left: 1px; border: 2px dashed #e0e0ea; border-radius: 8px; display: flex; flex-direction: column; align-items: center; padding-top: 100px; background-image: linear-gradient(-45deg, #f4f5f7 25%, transparent 25%, transparent 50%, #f4f5f7 50%, #f4f5f7 75%, transparent 75%, transparent); background-size: 37.500px 37.500px; }
.drop svg { margin-left: 3px; }
.drop p { margin: 16px 0 0; font-size: 15.650px; line-height: 20px; }
.lbl { display: block; height: 29px; line-height: 20px; font-size: 15.600px; position: relative; top: -1px; }

/* Rich-text editor */
.editor { width: 1459px; height: 300px; border: 1px solid #d1d1d1; font-family: "Liberation Sans", Arial, sans-serif; }
.cktop { height: 135px; background: #f8f8f8; border-bottom: 1px solid #d1d1d1; padding: 9px 0 0 9px; display: flex; flex-direction: column; gap: 9.500px; }
.row { display: flex; align-items: center; height: 32px; color: #484848; font-size: 15.300px; }
.b { width: 34.900px; height: 32px; flex: none; display: flex; align-items: center; justify-content: center; position: relative; }
.i { width: 20px; height: 20px; fill: #484848; }
.i.over { position: absolute; }
.dis { opacity: .32; }
.on { background: #fff; border: 1px solid #bcbcbc; }
.sep { width: 1px; height: 23px; background: #bcbcbc; margin: 0 2.700px; flex: none; }
.r3 .sep { margin: 0 3px; }
.b.source { width: 87.500px; justify-content: flex-start; padding-left: 7.500px; gap: 5px; }
.source .over { left: 7.500px; }
.b.dd { width: 41.500px; justify-content: flex-start; padding-left: 7px; }
.dd em { margin-left: 4px; }
em { width: 0; height: 0; border: 3px solid transparent; border-top: 4px solid #484848; border-bottom: 0; }
.t { font: 700 20px/1 "Open Sans", sans-serif; }
.it { font-style: italic; font-family: "DejaVu Serif", serif; font-size: 18px; }
.u { text-decoration: underline; }
.s { text-decoration: line-through; }
.x { font-size: 18px; }
.x sub, .x sup { font-size: 10px; line-height: 1; }
.x sub { margin-top: 12px; } .x sup { margin-top: -10px; }
.rf { font-family: "Open Sans", sans-serif; text-decoration: underline; }
.rf small { font-size: 12px; font-style: normal; margin-top: 11px; }
.combo { width: 114.500px; display: flex; align-items: center; justify-content: space-between; padding: 0 11px 0 11px; }
.r3 .combo:first-child { padding-left: 14px; width: 117.800px; padding-right: 13px; }
.fc { width: 20px; text-align: center; font-size: 17px; border-bottom: 3px solid #999; line-height: 17px; }
.bc { width: 19px; height: 19px; border-radius: 2px; background: #484848; color: #fff; text-align: center; font-size: 16px; line-height: 19px; }
.r3 .dd { left: -1px; }
.q { font-size: 22px; left: -1px; }
.ckbody { padding: 28px 25px; font-size: 16.250px; line-height: 20px; color: #333; }

.scroll { width: 21px; background: #f1f1f1; display: flex; flex-direction: column; align-items: center; padding: 9px 0 9px; }
.thumb { width: 17px; height: 301px; margin-top: 193px; background: #c1c1c1; }
.ar { width: 0; height: 0; border: 5px solid transparent; }
.up { border-top: 0; border-bottom-color: #4d4d4d; }
.dn { border-bottom: 0; border-top-color: #4d4d4d; margin-top: auto; }

/* Download shelf */
.downloads { height: 72px; flex: none; background: #363636; border-top: 1px solid #5a5a5a; border-bottom: 1px solid #484848; display: flex; align-items: center; color: #fff; padding: 0 0 2px 26px; }
.zip { width: 18px; height: 15px; }
.dl { width: 200px; margin-left: 17px; padding-top: 3px; display: flex; flex-direction: column; }
.dl b { font-weight: 400; font-size: 15.500px; line-height: 24px; letter-spacing: 0; }
.dl small { font-size: 12.500px; line-height: 25px; }
.dlup { width: 12px; height: 8px; margin-top: 2px; }
.downloads::before { content: ""; order: 1; width: 1px; height: 55px; background: #777; margin-left: 22px; }
.showall { order: 2; margin-left: auto; width: 97px; height: 39px; border: 1px solid #424242; border-radius: 4px; line-height: 37px; text-align: center; color: #8ab4f8; font-weight: 600; letter-spacing: -0.200px; }
.dlx { order: 3; width: 12px; height: 12px; margin: 0 17px 0 16px; }

/* Taskbar */
.taskbar { flex: 1; display: flex; align-items: center; padding: 0 0 1px 852px; color: #fff; background: linear-gradient(90deg, #1f1f2a 0, #1b222e 14%, #12255a 19%, #162a4a 26%, #121f5e 34%, #122468 42%, #14205f 50%, #1d2142 55%, #1b2238 65%, #141f4c 78%, #1a2436 86%, #1b212d 100%); }
.apps { display: flex; gap: 3px; }
.app { width: 52px; height: 50px; display: flex; align-items: center; justify-content: center; position: relative; border-radius: 5px; }
.run::after { content: ""; position: absolute; bottom: 1px; width: 8px; height: 4px; border-radius: 2px; background: #9a9fbd; }
.cur { background: #28305f; border: 1px solid #323a68; }
.cur::after { width: 20px; background: #4cb9f5; bottom: 0; }
.cb { position: absolute; left: 25px; top: 3px; width: 21px; height: 21px; border-radius: 50%; background: #07493e; color: #cde; font: 700 12px/21px "Open Sans", sans-serif; text-align: center; }
.tray { margin-left: auto; display: flex; align-items: center; padding-right: 25px; }
.tray svg { margin-right: 9px; }
.tray svg:first-child { margin-right: 16px; }
.clock { width: 75px; margin-top: -1px; display: flex; flex-direction: column; align-items: flex-end; line-height: 20px; }
.note { width: 20px; height: 20px; margin-left: 10px; border-radius: 50%; background: #4cc2ff; color: #123; font-size: 13px; line-height: 20px; text-align: center; }

/* File dialog */
.dialog { position: absolute; left: 9px; top: 0; width: 942px; height: 591px; border-radius: 10px; overflow: hidden; background: #191919; color: #fff; display: flex; flex-direction: column; box-shadow: 0 32px 64px rgba(0,0,0,.68), 0 0 10px rgba(0,0,0,.3); }
.dialog::after { content: ""; position: absolute; inset: 0; border: 1px solid rgba(120,120,120,.3); border-radius: 10px; pointer-events: none; }
.d-title { height: 38px; flex: none; background: linear-gradient(90deg, #1e1f22, #1e1f25 60%, #1c202e); display: flex; align-items: center; padding-left: 9px; position: relative; }
.d-badge { position: absolute; left: 20px; top: 9px; width: 9px; height: 9px; border-radius: 50%; background: #07493e; border: 1px solid #9bb; }
.d-title span { margin-left: 6px; }
.d-x { width: 13px; height: 13px; margin: 0 15px 0 auto; }
.d-nav { height: 64px; flex: none; display: flex; align-items: center; padding-left: 19px; padding-bottom: 1px; }
.a2 { margin-left: 27px; } .a3 { margin-left: 24px; } .a4 { margin-left: 22px; }
.addr, .search { height: 44px; border: 1px solid #535353; display: flex; align-items: center; }
.addr { width: 493px; margin-left: 18px; padding-left: 11px; }
.c1 { margin-left: 9px; } .p1 { margin-left: 10px; width: 52px; white-space: nowrap; } .c2 { margin-left: 11px; } .p2 { margin-left: 10px; }
.c3 { margin-left: auto; } .c4 { margin: 0 15px 0 31px; }
.search { width: 253px; margin-left: 12px; padding-left: 17px; color: #7b7b7b; }
.search span { margin-left: 18px; }
.d-tools { height: 39px; flex: none; background: #202020; display: flex; align-items: center; padding-left: 22px; padding-top: 1px; }
.organize { width: 60px; } .tri { border: 4px solid transparent; border-top: 5px solid #bbb; border-bottom: 0; margin-left: 6px; }
.newf { margin-left: 36px; letter-spacing: -0.200px; } .v1 { margin-left: auto; } .t2 { margin-left: 13px; } .v2 { margin-left: 27px; }
.help { width: 20px; height: 20px; border-radius: 50%; background: #0e87dc; text-align: center; line-height: 20px; margin: 0 19px 0 26px; }
.d-body { height: 350px; flex: none; display: flex; position: relative; overflow: hidden; }
.tree { width: 198px; flex: none; border-right: 1px solid #333; padding: 1px 0 0 3px; }
.ti { width: 171px; height: 40px; display: flex; align-items: center; padding-left: 41px; gap: 6px; position: relative; white-space: nowrap; }
.sel { background: #353535; }
.ic { width: 18px; height: 18px; }
.ic.big { width: 20px; height: 20px; margin: 0 -1px; }
.ic.fo { height: 16px; }
.pin { width: 14px; height: 14px; margin-left: auto; margin-right: 3px; }
.tw { position: absolute; left: 15px; width: 8px; height: 12px; color: #888; }
.line::before { content: ""; position: absolute; left: 9px; width: 152px; top: 20px; height: 1px; background: #3e3e3e; }
.tthumb { position: absolute; left: 182px; top: 132px; width: 6px; height: 186px; background: #989898; }
.files { flex: 1; text-align: center; padding-top: 21px; letter-spacing: -0.250px; }
.d-foot { flex: 1; background: #383838; padding: 16px 20px 0 0; position: relative; }
.fr { display: flex; align-items: flex-start; justify-content: flex-end; height: 37px; line-height: 29px; }
.fr label { margin-right: 6px; letter-spacing: -0.200px; }
.inp { width: 451px; height: 29px; border: 1px solid #9b9b9b; display: flex; align-items: center; justify-content: flex-end; padding: 0 4px; color: #ccc; }
.sel2 { width: 235px; height: 28px; margin-left: 15px; justify-content: space-between; padding-left: 3px; background: #333; }
.sel2 span { color: #fff; letter-spacing: -0.100px; }
.fb { display: flex; justify-content: flex-end; gap: 17px; padding-right: 1px; }
button { width: 108px; height: 31px; padding: 0; border: 1px solid #9b9b9b; border-radius: 4px; background: #333; color: #fff; font: inherit; letter-spacing: inherit; }
.open { border-color: #fff; }
.grip { position: absolute; right: 3px; bottom: 2px; }
```
